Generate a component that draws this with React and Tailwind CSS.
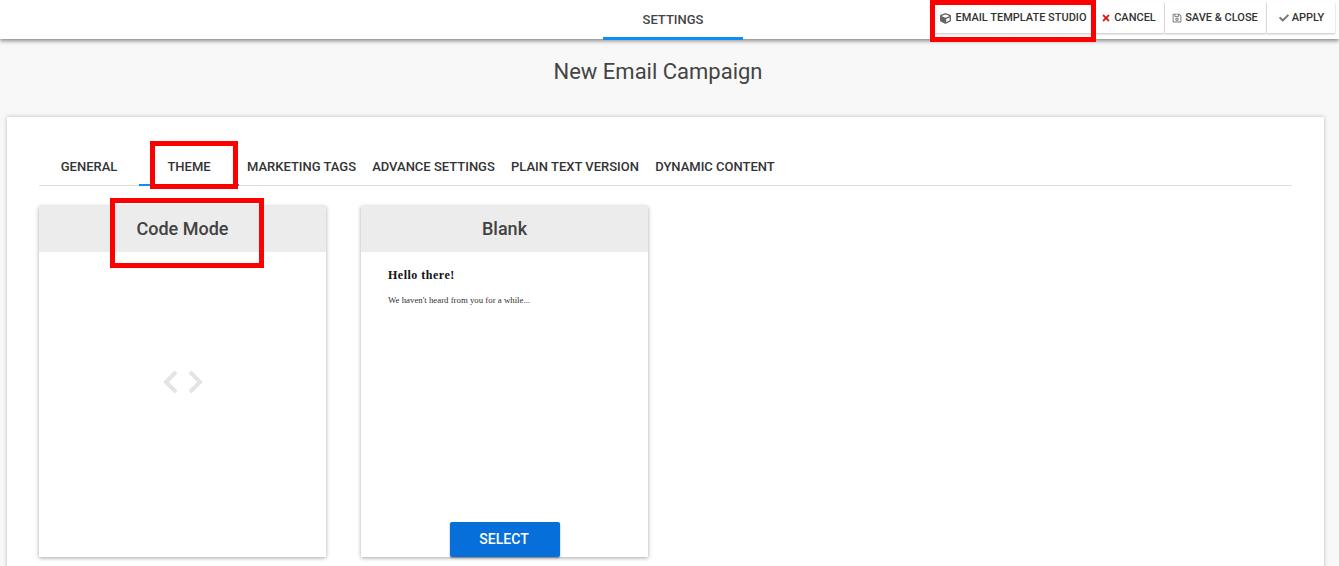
import { FaCheck, FaCube, FaRegSave, FaTimes } from 'react-icons/fa';

function ActionButton({ icon, label, className }) {
  return (
    <div className={`flex h-[31px] items-center justify-center bg-white pt-[1px] text-[11px] font-medium text-[#333] shadow-[0_1px_2px_rgba(0,0,0,0.25)] ${className}`}>
      {icon}
      <span>{label}</span>
    </div>
  );
}

function RedBox({ className }) {
  return <div className={`pointer-events-none absolute border-[5px] border-[#fd0000] ${className}`} />;
}

const tabs = [
  { label: 'GENERAL', width: 'w-[100px]' },
  { label: 'THEME', width: 'w-[100px]', active: true },
  { label: 'MARKETING TAGS', width: 'w-[125px]' },
  { label: 'ADVANCE SETTINGS', width: 'w-[139px]' },
  { label: 'PLAIN TEXT VERSION', width: 'w-[144px]' },
  { label: 'DYNAMIC CONTENT', width: 'w-[136px]' },
];

function ThemeCard({ title, children }) {
  return (
    <div className="relative flex h-[351px] w-[287px] shrink-0 flex-col bg-white shadow-[0_1px_4px_rgba(0,0,0,0.35)]">
      <div className="flex h-[46px] shrink-0 items-center justify-center bg-[#ececec] pb-[2px] text-[18px] font-medium text-[#424242]">
        {title}
      </div>
      {children}
    </div>
  );
}

export default function App() {
  return (
    <div className="relative h-[566px] w-[1339px] overflow-hidden bg-[#f8f8f8] font-['Roboto',sans-serif]">
      <header className="relative z-10 flex h-[39px] items-start bg-white shadow-[0_2px_4px_rgba(0,0,0,0.45)]">
        <div className="ml-[603px] flex h-[40px] w-[140px] items-center justify-center border-b-[3px] border-[#0c8ef5] pt-[2px] text-[13px] font-medium text-[#444]">
          SETTINGS
        </div>
        <div className="ml-[190px] mt-[2px] flex gap-px">
          <ActionButton icon={<FaCube size={11} color="#666" className="mr-[4px]" />} label="EMAIL TEMPLATE STUDIO" className="w-[161px]" />
          <ActionButton icon={<FaTimes size={10} color="#e01010" className="mr-[3px]" />} label="CANCEL" className="w-[69px] pr-[2px]" />
          <ActionButton icon={<FaRegSave size={10} color="#777" className="mr-[3px]" />} label="SAVE & CLOSE" className="w-[101px] pr-[1px]" />
          <ActionButton icon={<FaCheck size={10} color="#777" className="mr-[3px]" />} label="APPLY" className="w-[68px] pl-[1px]" />
        </div>
      </header>

      <h1 className="mt-[18px] pr-[23px] text-center text-[22px] leading-[30px] text-[#444]">New Email Campaign</h1>

      <main className="ml-[7px] mr-[15px] mt-[30px] h-[460px] bg-white px-[32px] pt-[31px] shadow-[0_0_4px_rgba(0,0,0,0.25)]">
        <div className="flex h-[38px] border-b border-[#dfdfdf]">
          {tabs.map((tab) => (
            <div
              key={tab.label}
              className={`flex h-[38px] items-center justify-center text-[13px] font-medium text-[#333] ${tab.width} ${tab.active ? 'border-b-2 border-[#0c8ef5] pt-[2px]' : ''}`}
            >
              {tab.label}
            </div>
          ))}
        </div>

        <div className="mt-[20px] flex gap-[35px]">
          <ThemeCard title="Code Mode">
            <div className="flex flex-1 items-center justify-center pb-[46px]">
              <svg width="40" height="24" viewBox="0 0 40 24" fill="none" stroke="#e4e4e4" strokeWidth="4">
                <path d="M13 2 3 12 13 22" />
                <path d="M27 2 37 12 27 22" />
              </svg>
            </div>
          </ThemeCard>
          <ThemeCard title="Blank">
            <div className="px-[27px] pt-[17px] font-['Liberation_Serif',serif]">
              <p className="text-[12px] leading-[13px] font-bold tracking-[0.5px] text-[#111]">Hello there!</p>
              <p className="mt-[13px] text-[8.8px] leading-[10px] text-[#333]">We haven't heard from you for a while...</p>
            </div>
            <div className="absolute bottom-0 left-[89px] flex h-[35px] w-[110px] items-center justify-center rounded-[2px] bg-[#066fd9] pr-[2px] text-[14px] font-medium text-white shadow-[0_1px_2px_rgba(0,0,0,0.4)]">
              SELECT
            </div>
          </ThemeCard>
        </div>
      </main>

      <RedBox className="left-[930px] top-0 z-20 h-[42px] w-[166px]" />
      <RedBox className="left-[150px] top-[141px] h-[48px] w-[88px]" />
      <RedBox className="left-[110px] top-[198px] h-[70px] w-[154px]" />
    </div>
  );
}
